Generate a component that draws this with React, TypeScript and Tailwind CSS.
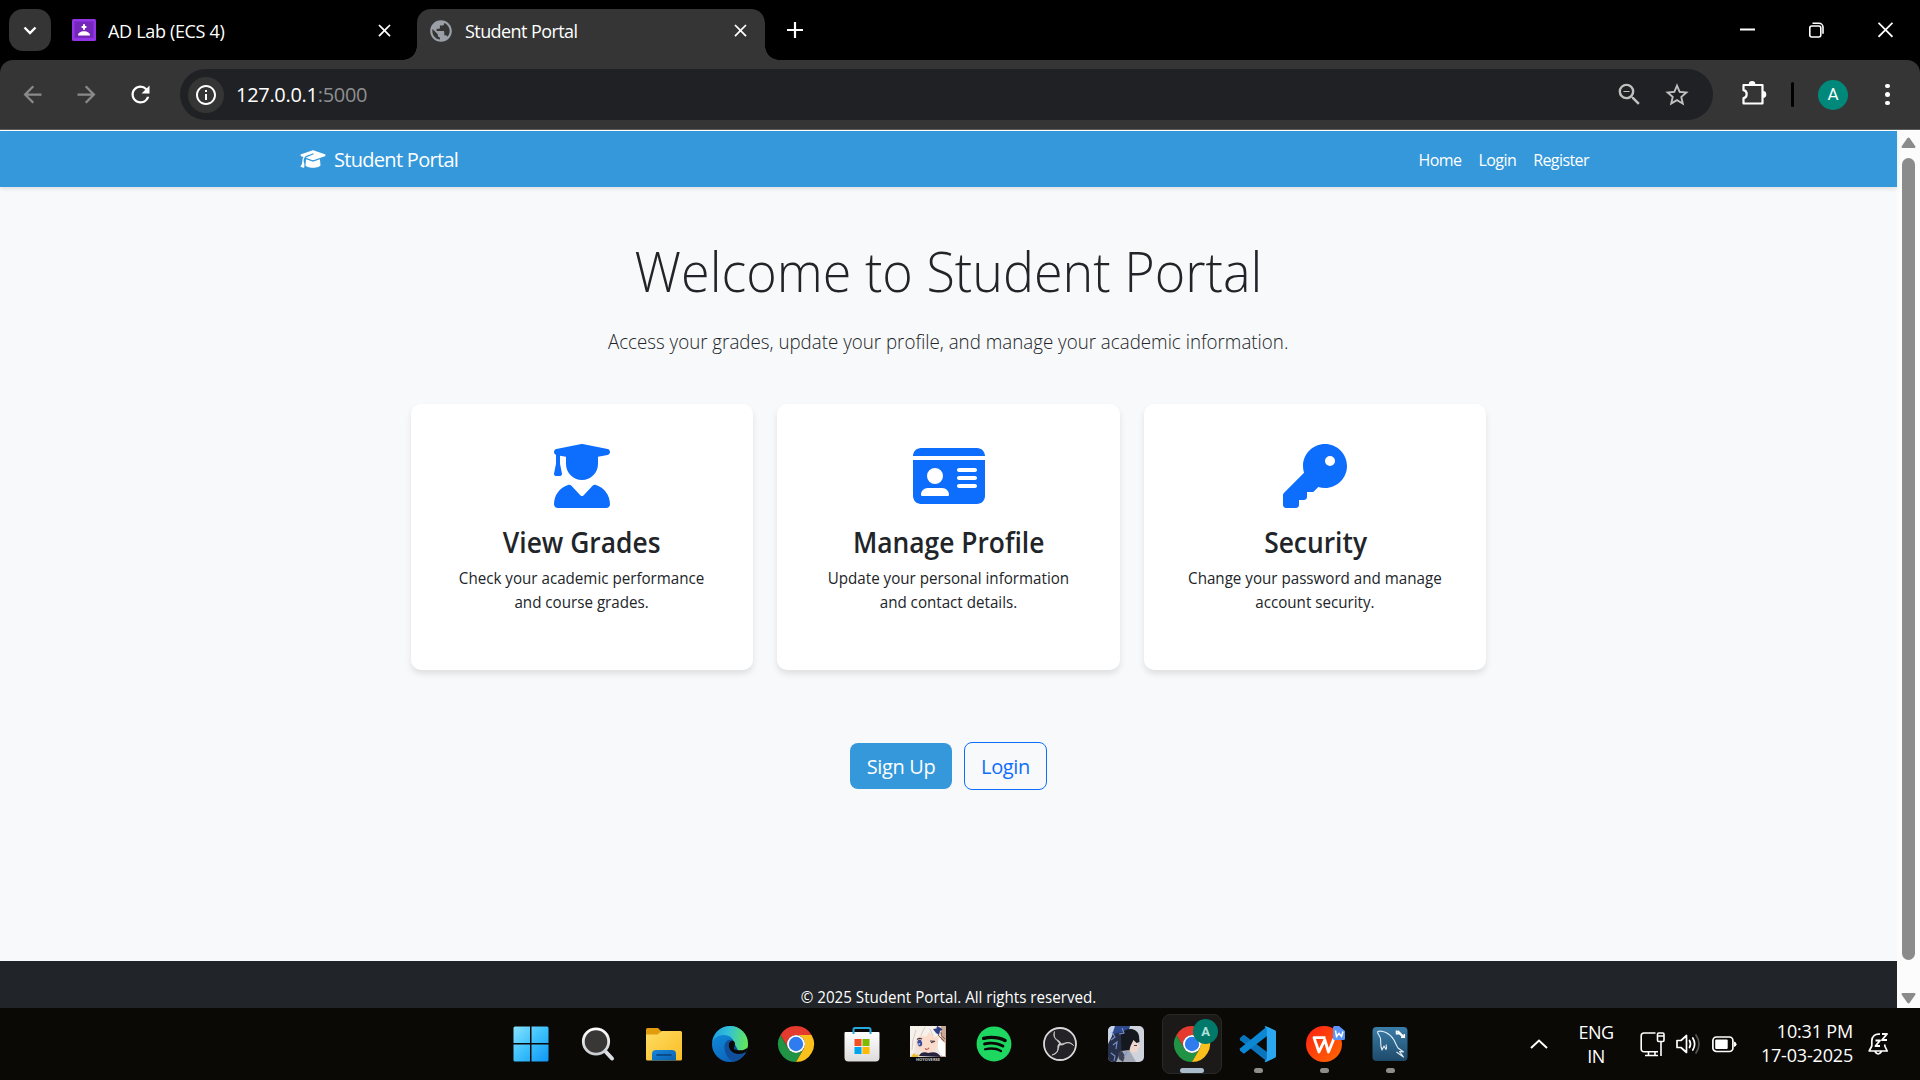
import React from "react";
import {
  MdArrowBack,
  MdArrowForward,
  MdClose,
  MdInfoOutline,
  MdPublic,
  MdRefresh,
  MdStarBorder,
  MdZoomOut,
} from "react-icons/md";
import { FaGraduationCap, FaIdCard, FaKey, FaSpotify, FaUserGraduate } from "react-icons/fa6";

/* ---------- Browser window ---------- */

function TabStrip() {
  return (
    <div className="flex h-[60px] shrink-0 items-end bg-black text-white">
      <div className="mb-[9px] ml-[9px] flex h-[42px] w-[42px] items-center justify-center rounded-[14px] bg-[#353535]">
        <svg width="14" height="9" viewBox="0 0 14 9" fill="none" stroke="#fff" strokeWidth="2.4">
          <path d="M1.5 1.5 7 7l5.500-5.500" />
        </svg>
      </div>

      <div className="flex h-[60px] w-[361px] items-center pl-[21px]">
        <svg width="24" height="22" viewBox="0 0 24 22">
          <rect width="24" height="22" rx="1.500" fill="#9334e6" />
          <rect x="2.500" y="2.500" width="19" height="16.500" fill="#7627bb" />
          <path d="M12 5.200v5.600M9.600 8h4.800" stroke="#fff" strokeWidth="2" />
          <path d="M6 16.500c0-2.600 2.600-4.300 6-4.300s6 1.700 6 4.300z" fill="#fff" />
        </svg>
        <span className="ml-3 pt-[3px] text-[18px] tracking-[-0.018em]">AD Lab (ECS 4)</span>
        <MdClose className="mr-[17px] ml-auto size-[21px]" />
      </div>

      <div className="-ml-[9px] h-[14px] w-[14px] bg-[radial-gradient(circle_at_0_0,transparent_13.5px,#353535_14px)]" />
      <div className="flex h-[51px] w-[348px] items-center rounded-t-[14px] bg-[#353535] pb-[8px] pl-[11px]">
        <MdPublic className="size-[26px] text-[#9aa0a6]" />
        <span className="ml-[10px] pt-[2px] pl-px text-[18px] tracking-[-0.032em]">Student Portal</span>
        <MdClose className="mr-[14px] ml-auto size-[21px]" />
      </div>
      <div className="h-[14px] w-[14px] bg-[radial-gradient(circle_at_100%_0,transparent_13.5px,#353535_14px)]" />

      <svg className="mb-[22px] ml-[8px]" width="16" height="16" viewBox="0 0 16 16" stroke="#fff" strokeWidth="2.200">
        <path d="M8 0v16M0 8h16" />
      </svg>

      <div className="mr-[27px] mb-[22px] ml-auto flex items-center gap-[54px]">
        <svg width="15" height="16" viewBox="0 0 15 16" stroke="#fff" strokeWidth="2">
          <path d="M0 7.500h15" />
        </svg>
        <svg width="15" height="16" viewBox="0 0 15 16" fill="none" stroke="#fff" strokeWidth="1.600">
          <rect x="0.800" y="4" width="11" height="11" rx="2" />
          <path d="M3.500 1.300h6.500a4 4 0 0 1 4 4v6.500" />
        </svg>
        <svg width="15" height="16" viewBox="0 0 15 16" stroke="#fff" strokeWidth="1.800">
          <path d="m.5.800 14 14M14.500.8l-14 14" />
        </svg>
      </div>
    </div>
  );
}

function Toolbar() {
  return (
    <div className="bg-black">
      <div className="flex h-[69px] items-center rounded-t-[13px] bg-[#353535] text-white">
        <MdArrowBack className="ml-[19px] size-[27px] text-[#8a8a8a]" />
        <MdArrowForward className="ml-[27px] size-[27px] text-[#8a8a8a]" />
        <MdRefresh className="ml-[27px] size-[27px]" />
        <div className="ml-[26px] flex h-[51px] w-[1533px] items-center rounded-full bg-[#202124] pl-[8px]">
          <div className="flex size-[36px] items-center justify-center rounded-full bg-[#353535]">
            <MdInfoOutline className="size-[24px]" />
          </div>
          <span className="ml-[12px] text-[20px] tracking-[-0.015em]">
            127.0.0.1<span className="text-[#8d8f92]">:5000</span>
          </span>
          <MdZoomOut className="mr-[19px] ml-auto size-[29px] text-[#c0c0c0]" />
          <MdStarBorder className="mr-[22px] size-[28px] text-[#c0c0c0]" />
        </div>
        <svg className="-mt-[3px] ml-[28px]" width="26" height="26" viewBox="0 0 26 26">
          <path
            d="M2.500 5h19v18.500h-19v-5.300c4-.6 4.500-7.300 0-8z"
            fill="none"
            stroke="#fff"
            strokeWidth="2.200"
            strokeLinejoin="round"
          />
          <path d="M7.800 4.500a3.300 3.400 0 0 1 6.600 0zM22 11a3.300 3.400 0 0 1 0 6.800z" fill="#fff" />
        </svg>
        <div className="ml-[24px] h-[25px] w-[3px] rounded-full bg-black" />
        <div className="ml-[24px] flex size-[30px] items-center justify-center rounded-full bg-[#00897b] font-[Roboto] text-[17px]">
          A
        </div>
        <div className="ml-[37px] flex flex-col gap-[4px]">
          <i className="size-[4.5px] rounded-full bg-white" />
          <i className="size-[4.5px] rounded-full bg-white" />
          <i className="size-[4.5px] rounded-full bg-white" />
        </div>
      </div>
      <div className="h-px bg-[#5c5c5c]" />
      <div className="h-px bg-white" />
    </div>
  );
}

/* ---------- Web page ---------- */

function Navbar() {
  return (
    <nav className="z-10 flex h-[56px] shrink-0 items-center bg-[#3498db] pr-[308px] pl-[300px] text-white shadow-[0_2px_4px_rgba(0,0,0,0.1)]">
      <FaGraduationCap className="h-[20px] w-[26px]" />
      <span className="ml-[8px] pt-px text-[20px] tracking-[-0.035em]">Student Portal</span>
      <div className="ml-auto flex gap-[17px] pt-px text-[16px] tracking-[-0.036em]">
        <a>Home</a>
        <a>Login</a>
        <a>Register</a>
      </div>
    </nav>
  );
}

const features = [
  { Icon: FaUserGraduate, title: "View Grades", text: ["Check your academic performance", "and course grades."] },
  { Icon: FaIdCard, title: "Manage Profile", text: ["Update your personal information", "and contact details."] },
  { Icon: FaKey, title: "Security", text: ["Change your password and manage", "account security."] },
];

function Page() {
  return (
    <div className="flex h-full w-[1897px] flex-col bg-[#f8f9fa] text-[#212529]">
      <Navbar />
      <main className="flex h-[774px] shrink-0 flex-col items-center pt-[50px]">
        <h1 className="scale-x-[0.93] text-[56px] leading-[67px] font-light whitespace-nowrap">Welcome to Student Portal</h1>
        <p className="mt-[23px] scale-x-[0.937] text-[20px] leading-[30px] font-light whitespace-nowrap">
          Access your grades, update your profile, and manage your academic information.
        </p>
        <div className="mt-[47px] flex gap-6">
          {features.map(({ Icon, title, text }) => (
            <section
              key={title}
              className="flex h-[266px] w-[342.66px] flex-col items-center rounded-[10px] bg-white pt-10 shadow-[0_4px_6px_rgba(0,0,0,0.1)]"
            >
              <Icon className="h-[64px] w-[72px] text-[#0d6efd]" />
              <h3 className="mt-[18px] scale-x-[0.942] text-[28px] leading-[33px] font-semibold">{title}</h3>
              <p className="mt-[7px] scale-x-[0.947] text-center text-[16px] leading-6">
                {text[0]}
                <br />
                {text[1]}
              </p>
            </section>
          ))}
        </div>
        <div className="mt-[72px] flex items-center gap-3 text-[20px] tracking-[-0.018em]">
          <button className="h-[46px] w-[102px] rounded-[8px] bg-[#3498db] pt-[2px] text-white">Sign Up</button>
          <button className="h-[48px] w-[83px] rounded-[8px] border border-[#0d6efd] pt-[2px] text-[#0d6efd]">Login</button>
        </div>
      </main>
      <footer className="flex-1 overflow-hidden bg-[#212529] pt-6 text-center text-[16px] leading-6 text-white">
        <p className="scale-x-[0.946]">© 2025 Student Portal. All rights reserved.</p>
      </footer>
    </div>
  );
}

function Scrollbar() {
  return (
    <div className="flex w-[23px] flex-col items-center bg-[#fcfcfc] pt-[6px] pb-[4px]">
      <svg width="15" height="12" viewBox="0 0 15 12" fill="#8b8b8b">
        <path d="M6.300 1.300q1.200-1.400 2.400 0l5.600 8q.6 1.700-1 1.700H1.700q-1.600 0-1-1.700z" />
      </svg>
      <div className="mt-[9px] h-[802px] w-[13px] rounded-full bg-[#8b8b8b]" />
      <svg className="mt-auto" width="15" height="12" viewBox="0 0 15 12" fill="#8b8b8b">
        <path d="M6.300 10.700q1.200 1.400 2.400 0l5.600-8q.6-1.700-1-1.700H1.700q-1.600 0-1 1.700z" />
      </svg>
    </div>
  );
}

/* ---------- Taskbar icons, all drawn on a 36px grid ---------- */

function Art({ children }: { children: React.ReactNode }) {
  return (
    <svg width="36" height="36" viewBox="0 0 36 36" overflow="visible">
      {children}
    </svg>
  );
}

const WindowsIcon = () => (
  <Art>
    <defs>
      <linearGradient id="win" x1="0" y1="0" x2="36" y2="36" gradientUnits="userSpaceOnUse">
        <stop offset="0" stopColor="#8ae3ff" />
        <stop offset="0.5" stopColor="#3cc0fb" />
        <stop offset="1" stopColor="#0d95f5" />
      </linearGradient>
    </defs>
    <path
      fill="url(#win)"
      d="M2 .5h15v16.500H.5V2A1.500 1.500 0 0 1 2 .5zM18.500.5h15.500a1.500 1.500 0 0 1 1.500 1.500v15h-17zM.5 18.500H17v17H2A1.500 1.500 0 0 1 .5 34zM18.500 18.500h17V34a1.500 1.500 0 0 1-1.500 1.500H18.500z"
    />
  </Art>
);

const SearchIcon = () => (
  <Art>
    <defs>
      <linearGradient id="lens" x1="0" y1="0" x2="0" y2="1">
        <stop offset="0" stopColor="#fff" />
        <stop offset="1" stopColor="#c9ccd1" />
      </linearGradient>
    </defs>
    <path d="m25.500 25.500 6.500 7" stroke="#dcdfe3" strokeWidth="4" strokeLinecap="round" />
    <circle cx="16" cy="15.500" r="12.700" fill="#383736" stroke="url(#lens)" strokeWidth="2.800" />
  </Art>
);

const FolderIcon = () => (
  <Art>
    <defs>
      <linearGradient id="fold" x1="0" y1="0" x2="1" y2="1">
        <stop offset="0" stopColor="#ffdc63" />
        <stop offset="1" stopColor="#f9bd24" />
      </linearGradient>
      <linearGradient id="foldb" x1="0" y1="0" x2="1" y2="1">
        <stop offset="0" stopColor="#1588dc" />
        <stop offset="1" stopColor="#0c5fae" />
      </linearGradient>
    </defs>
    <path d="M0 3.500A1.500 1.500 0 0 1 1.500 2H12l3.500 3.500H34V20H0z" fill="#e09c0c" />
    <path d="M0 8.500h11.500L16 5h18.500A1.500 1.500 0 0 1 36 6.500V33a1.500 1.500 0 0 1-1.500 1.500h-33A1.500 1.500 0 0 1 0 33z" fill="url(#fold)" />
    <path d="M6 34.500V28a4 4 0 0 1 4-4h16a4 4 0 0 1 4 4v6.500z" fill="url(#foldb)" />
    <path d="M11 29h14" stroke="#083f76" strokeWidth="1.600" strokeLinecap="round" />
  </Art>
);

const EdgeIcon = () => (
  <Art>
    <defs>
      <linearGradient id="eg" x1="0" y1="0.500" x2="1" y2="0.600">
        <stop offset="0" stopColor="#1f9fe0" />
        <stop offset="0.450" stopColor="#33c2d6" />
        <stop offset="1" stopColor="#66e84f" />
      </linearGradient>
      <linearGradient id="eb" x1="0" y1="0" x2="0.600" y2="1">
        <stop offset="0" stopColor="#1293e0" />
        <stop offset="1" stopColor="#0b62b8" />
      </linearGradient>
      <clipPath id="ec">
        <circle cx="18" cy="18" r="18" />
      </clipPath>
    </defs>
    <g clipPath="url(#ec)">
      <rect width="36" height="36" fill="url(#eb)" />
      <path d="M0 17C1.500 6 9 0 18 0h18v22l-8 4-7-2c4-6 0-15-9-15C6 9 1.500 12 0 17z" fill="url(#eg)" />
      <path d="M20.500 14C15 12.500 12 17 12.500 22 13 30 19 37 26 36l10-8-9-2z" fill="#114f9c" />
      <path
        d="M37 19c-1.500 4-5 5.200-8.500 5.200-4.500 0-7.500-.7-6.500-2.700 1.500-2.600 1.500-7-2-6.700-5 1-4 9.500 2 12.200 4 1.700 8.500.8 11.300-.7L37 32z"
        fill="#0b0907"
      />
      <path d="m31.500 27.200 2-.9-.6 2.200-1.500 2z" fill="#114f9c" />
    </g>
  </Art>
);

const ChromeIcon = () => (
  <Art>
    <path d="M18 9h15.590A18 18 0 0 0 2.410 9l7.800 13.500A9 9 0 0 1 18 9z" fill="#e53b2e" />
    <path d="M2.410 9l7.800 13.500a9 9 0 0 0 15.580 0L18 36A18 18 0 0 1 2.410 9z" fill="#219344" />
    <path d="M33.590 9A18 18 0 0 1 18 36l7.790-13.500A9 9 0 0 0 18 9z" fill="#fcc01c" />
    <circle cx="18" cy="18" r="9" fill="#fff" />
    <circle cx="18" cy="18" r="7.200" fill="#2f7cf0" />
  </Art>
);

const StoreIcon = () => (
  <Art>
    <defs>
      <linearGradient id="bag" x1="0" y1="0" x2="0" y2="1">
        <stop offset="0" stopColor="#fff" />
        <stop offset="1" stopColor="#dcdcdc" />
      </linearGradient>
    </defs>
    <path d="M.5 7a1 1 0 0 1 1-1h33a1 1 0 0 1 1 1v24.500a4 4 0 0 1-4 4h-27a4 4 0 0 1-4-4z" fill="url(#bag)" />
    <path d="M9.500 8V3.500a1.500 1.500 0 0 1 1.500-1.500h14a1.500 1.500 0 0 1 1.500 1.500V8" fill="none" stroke="#27a9e0" strokeWidth="2" />
    <path d="M10.500 13h7v7h-7z" fill="#f25022" />
    <path d="M18.500 13h7v7h-7z" fill="#7fba00" />
    <path d="M10.500 21h7v7h-7z" fill="#00a4ef" />
    <path d="M18.500 21h7v7h-7z" fill="#ffb900" />
  </Art>
);

const PaimonIcon = () => (
  <Art>
    <rect width="36" height="36" fill="#080808" />
    <path d="M0 0h36v31H0z" fill="#f0e6df" />
    <path d="M31 0h5v31h-5z" fill="#c9a896" />
    <path d="M29 12c-2 6-2 13 3 18h3V17z" fill="#fff" />
    <path d="M5 11c2-6 20-7 23 0 1 7-1 15-11 16C9 27 4 20 5 11z" fill="#fbdcca" />
    <path d="M0 0h25l3 10-4 1-5-5-3 5-5-2-5 5-2 13-4 2z" fill="#f7f1ec" />
    <path d="M6 4 3 14l-1 10M15 1l-4 8M20 3l3 7" stroke="#d2c5be" strokeWidth="0.900" fill="none" />
    <ellipse cx="9.800" cy="17" rx="2.300" ry="3.400" fill="#3a4a9c" transform="rotate(-12 9.800 17)" />
    <circle cx="9.300" cy="18" r="1" fill="#9fc4f4" />
    <path d="M7 13.500q2.500-2 5-.5M20 15l5 .3-4 1.500" stroke="#4a3b4e" strokeWidth="1.100" fill="none" />
    <path d="M15 22.500q2.500 2 4-.8" stroke="#c0574e" strokeWidth="1.100" fill="none" />
    <path d="m23 3 3.500-.5L27 0l3 1.500 2.500 2L30 5l-1 4-3-2z" fill="#2d3f86" />
    <path d="M31 6q-1 4 4 7M28 9l6 6" stroke="#8c5f50" strokeWidth="1" fill="none" />
    <path d="M9 30c2-5 7-4 9-3 5-1 9-2 13 4z" fill="#27223f" />
    <path d="m1 31 3-4 2 2 3-1-1 3z" fill="#eebb2e" />
    <text x="18" y="34.800" textAnchor="middle" fontSize="4" fontWeight="700" textLength="24" fill="#cfcfcf">
      HOYOVERSE
    </text>
  </Art>
);

const ObsIcon = () => (
  <Art>
    <circle cx="18" cy="18" r="16" fill="#242226" stroke="#d8d8d8" strokeWidth="1.800" />
    {[0, 120, 240].map((a) => (
      <g key={a} transform={`rotate(${a} 18 18)`}>
        <path d="M18 18.500C17 14.500 9.500 13 12.500 5.500 11.500 11 13.500 13 16 14.300c1.800 1 2.700 2.200 2.800 4z" fill="#cfcfcf" stroke="#cfcfcf" strokeWidth="0.700" />
      </g>
    ))}
  </Art>
);

const PortraitIcon = () => (
  <Art>
    <defs>
      <clipPath id="pc">
        <rect width="36" height="36" rx="5" />
      </clipPath>
    </defs>
    <g clipPath="url(#pc)">
      <rect width="36" height="36" fill="#cfd3dc" />
      <path d="M0 0h12L4 9 0 12z" fill="#c8d3ea" />
      <path d="M7 0h15l-2 8-9 6-7-2 1-6z" fill="#2f4a8c" />
      <path d="M0 18 5 8l9-2 6 6-6 12 4 12H0z" fill="#27304a" />
      <path d="M19 12h12l-.5 6 2 3-2.500 1-.5 4-5 .5-6-2z" fill="#f0d5cd" />
      <path d="M13 12C12 2 29-1 31 10l.5 6-3 1-3-3-3 6-2 8-7-3z" fill="#16181f" />
      <path d="m8 36 5-11 8-1 3 5 4 7z" fill="#a3a8b6" />
      <path d="m10 27 4-2 3 5-2 6-4-3z" fill="#3d4252" />
      <path d="m4 6 3 5-4 3M14 2l2 5-5 1M5 19l4-3-1 7M3 27l4 3-1 5M19 26l-3 5" stroke="#7992cf" strokeWidth="1.100" fill="none" />
      <path d="M26 19.500h3" stroke="#4c3c4c" strokeWidth="1.100" />
    </g>
  </Art>
);

const CodeIcon = () => (
  <Art>
    <path d="m0 12 3-2.800q.8-.5 1.600 0L27 26v9.500L.2 14.200q-.8-1-.2-2.200z" fill="#0a75bd" />
    <path d="m0 24.500 3 2.800q.8.500 1.600 0L27 10V.5L.2 22.300q-.8 1-.2 2.200z" fill="#0d87d3" />
    <path d="m26 .2 9 4q1 .5 1 1.600v24.400q0 1.100-1 1.600l-9 4.200q-1 .2-1.500-.4L26.800 33V3L24.500.6q.5-.6 1.500-.4z" fill="#2aa7f0" />
  </Art>
);

const WpsIcon = () => (
  <Art>
    <defs>
      <linearGradient id="wps" x1="0" y1="0" x2="1" y2="1">
        <stop offset="0" stopColor="#ff1f14" />
        <stop offset="1" stopColor="#ff6a00" />
      </linearGradient>
    </defs>
    <circle cx="18" cy="18" r="18" fill="url(#wps)" />
    <path
      d="M19.500 11.700H8L13 26l5.800-12.300L22.500 26 28 12.500"
      fill="none"
      stroke="#fff"
      strokeWidth="2.800"
      strokeLinejoin="round"
    />
    <path d="M28 0h5l6 5v7.500a1.500 1.500 0 0 1-1.500 1.500H28.500A1.500 1.500 0 0 1 27 12.500V1.500z" fill="#5a94f8" />
    <path d="m29.500 4.500 1 6 2.500-3 2.500 3 1.500-5" fill="none" stroke="#fff" strokeWidth="1.500" />
  </Art>
);

const WorkbenchIcon = () => (
  <Art>
    <defs>
      <linearGradient id="wb" x1="0" y1="0" x2="0" y2="1">
        <stop offset="0" stopColor="#3a7da9" />
        <stop offset="1" stopColor="#1e4a69" />
      </linearGradient>
    </defs>
    <rect x="0.500" y="1" width="35" height="34" rx="4" fill="url(#wb)" />
    <path
      d="M5.500 5.500C10 4 18 7 22 14c1.500 3 2.500 6 4 8l5.500 4-4-.5 4 5.500-7-5M5.500 5.500c0 3 2.500 4 3 7 .5 4-.5 7 1.500 11.500l2-4 2 3.500c1-1.500.5-3 0-5"
      fill="none"
      stroke="#e3eef5"
      strokeWidth="1.100"
      strokeLinejoin="round"
    />
    <path d="m25.500 5 6 6" stroke="#fff" strokeWidth="2.400" />
    <path d="M24.500 4.500v3.300h3.300M29 11.200h3.300V8" stroke="#fff" strokeWidth="1.500" fill="none" />
  </Art>
);

function Slot({ children, running }: { children: React.ReactNode; running?: boolean }) {
  return (
    <div className="relative flex h-full w-[66px] items-center justify-center">
      {children}
      {running && <i className="absolute bottom-[7px] h-[5px] w-[9px] rounded-full bg-[#8d8d8c]" />}
    </div>
  );
}

function Tray() {
  return (
    <div className="ml-auto flex h-full items-center pr-[29px] text-[18px] leading-6 text-white">
      <svg width="18" height="10" viewBox="0 0 18 10" fill="none" stroke="#fff" strokeWidth="2">
        <path d="m1 9 8-7.500L17 9" />
      </svg>
      <div className="ml-[26px] w-[44px] pb-px text-center tracking-[-0.03em]">
        ENG
        <br />
        IN
      </div>
      <svg className="ml-[22px]" width="25" height="26" viewBox="0 0 25 26" fill="none" stroke="#fff" strokeWidth="1.600">
        <path d="M15.500 2H4a2.800 2.800 0 0 0-2.800 2.800V18A2.800 2.800 0 0 0 4 20.800h14M8.500 21v3.500M15 21v3.500M5 24.500h13" />
        <rect x="17.500" y="2" width="6.500" height="8.500" rx="1.200" />
        <path d="M17.500 5h6.500M21 10.500V25" />
      </svg>
      <svg className="ml-[11px]" width="25" height="22" viewBox="0 0 25 22" fill="none" stroke="#fff" strokeWidth="1.700" strokeLinejoin="round">
        <path d="M1 7.500h4L10.500 2.500v17L5 14.500H1z" />
        <path d="M13.500 7.500q2 3.500 0 7M16.800 5q3.700 6 0 12" strokeLinecap="round" />
        <path d="M20 2q6 9 0 18" stroke="#555" strokeLinecap="round" />
      </svg>
      <svg className="ml-[11px]" width="25" height="17" viewBox="0 0 25 17">
        <rect x="0.900" y="1" width="20" height="14.500" rx="3.500" fill="none" stroke="#fff" strokeWidth="1.700" />
        <rect x="3.200" y="3.500" width="12.500" height="9.500" rx="1" fill="#fff" />
        <path d="M22 5.500q2.500.8 2.500 2.800T22 11z" fill="#fff" />
      </svg>
      <div className="ml-[21px] w-[96px] pr-px pb-[2px] text-right whitespace-nowrap tracking-[-0.01em]">
        10:31 PM
        <br />
        17-03-2025
      </div>
      <svg className="mr-px ml-[14px]" width="22" height="24" viewBox="0 0 22 24" fill="none" stroke="#fff" strokeWidth="1.700" strokeLinejoin="round">
        <path d="M12 2.200C7 1.500 3.800 4.500 3.800 9v5L1.200 19h18l-2.400-5v-1.500M7 19.500q3 5 6.500 0" />
        <path d="M7.500 8.500h4.500l-4.500 5.500H12M14 2h5l-5 6h5" strokeWidth="1.900" />
      </svg>
    </div>
  );
}

function Taskbar() {
  return (
    <div className="flex h-[72px] shrink-0 items-center bg-[#0b0906] pl-[499px]">
      <Slot>
        <div className="pr-[3px]">
          <WindowsIcon />
        </div>
      </Slot>
      <Slot><SearchIcon /></Slot>
      <Slot><FolderIcon /></Slot>
      <Slot><EdgeIcon /></Slot>
      <Slot><ChromeIcon /></Slot>
      <Slot><StoreIcon /></Slot>
      <Slot><PaimonIcon /></Slot>
      <Slot><FaSpotify className="size-[36px] text-[#1ed760]" /></Slot>
      <Slot><ObsIcon /></Slot>
      <Slot><PortraitIcon /></Slot>
      <Slot>
        <div className="relative flex size-[60px] items-center justify-center rounded-[8px] border border-[#2a2826] bg-[#1c1a18]">
          <ChromeIcon />
          <span className="absolute top-[4px] right-[3px] flex size-[25px] items-center justify-center rounded-full bg-[#00796b] font-[Roboto] text-[13px] font-bold text-[#b2e0da]">
            A
          </span>
          <i className="absolute bottom-0 h-[5px] w-[24px] rounded-full bg-[#a9bccb]" />
        </div>
      </Slot>
      <Slot running><CodeIcon /></Slot>
      <Slot running><WpsIcon /></Slot>
      <Slot running><WorkbenchIcon /></Slot>
      <Tray />
    </div>
  );
}

export default function App() {
  return (
    <div className="flex h-[1080px] w-[1920px] flex-col overflow-hidden bg-black font-['Open_Sans','Noto_Sans',sans-serif]">
      <TabStrip />
      <Toolbar />
      <div className="flex h-[877px] shrink-0">
        <Page />
        <Scrollbar />
      </div>
      <Taskbar />
    </div>
  );
}
